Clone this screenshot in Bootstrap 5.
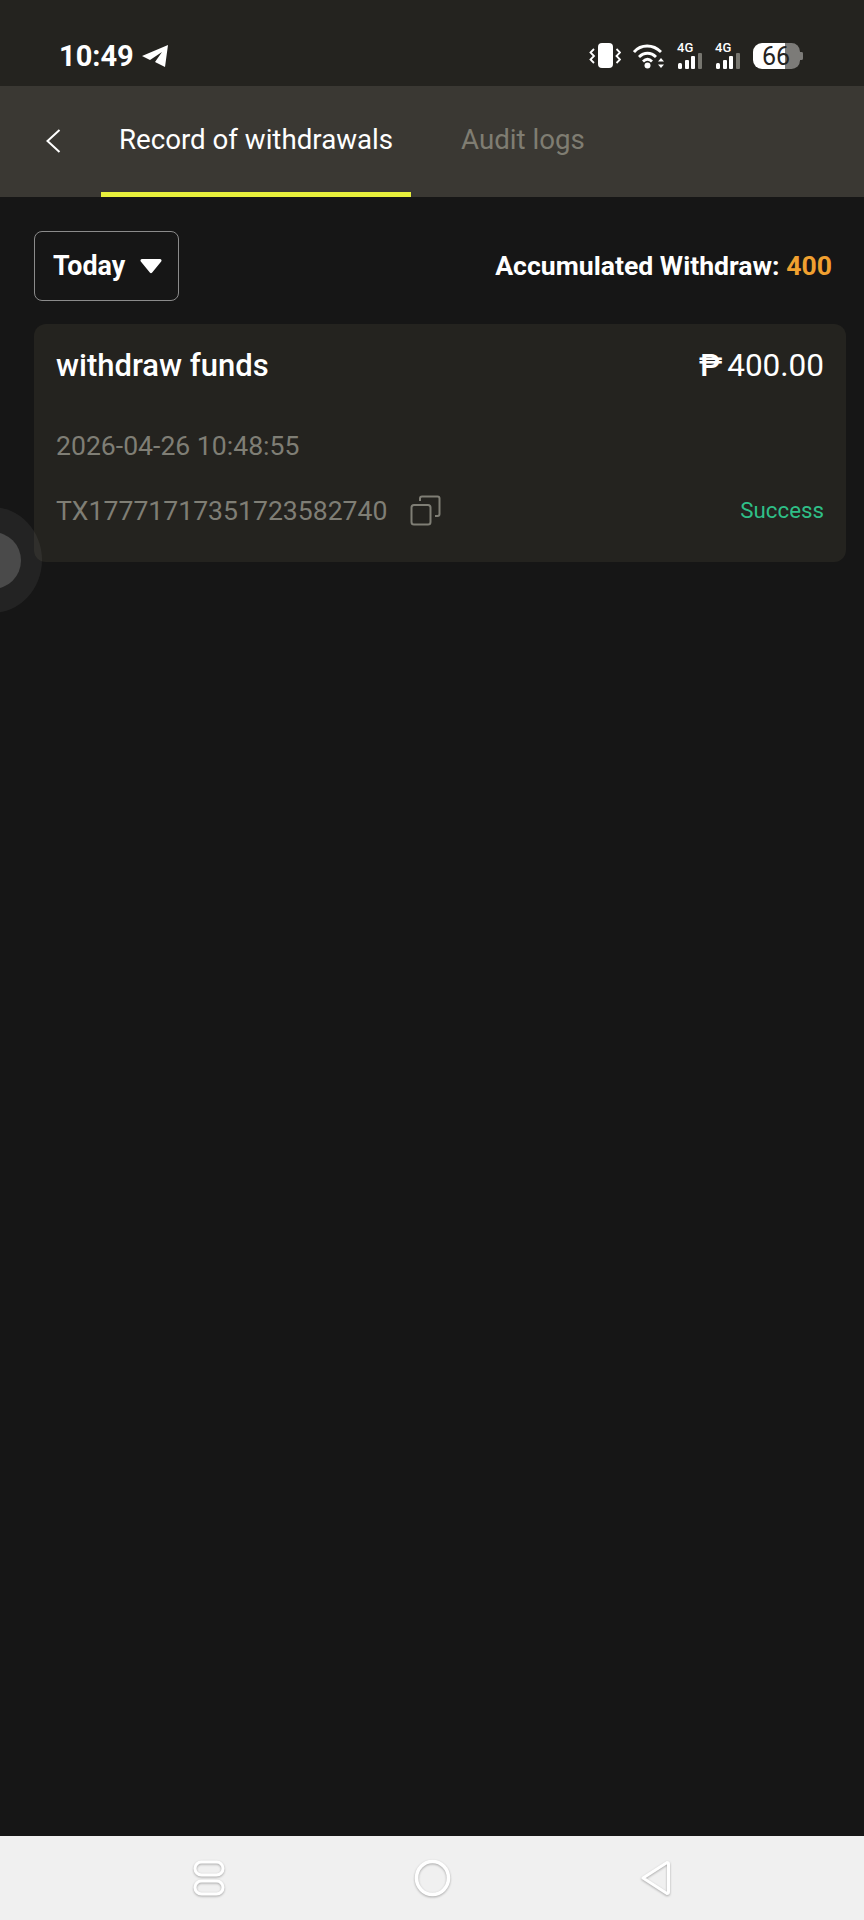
<!DOCTYPE html>
<html lang="en">
<head>
  <meta charset="UTF-8">
  <title>Record of withdrawals</title>
  <meta name="viewport" content="width=device-width, initial-scale=1">
  <link href="https://cdn.jsdelivr.net/npm/bootstrap@5.3.0/dist/css/bootstrap.min.css" rel="stylesheet">
  <style>
    body {
      background: #161616;
      font-family: Roboto, "Noto Sans", sans-serif;
      height: 1920px;
      overflow: hidden;
      color: #fff;
    }
    .status-row {
      height: 86px;
      background: #24231f;
      padding: 26px 61px 0 59px;
    }
    .status-time { font-size: 29px; font-weight: 700; line-height: 1; }
    .status-net { font-size: 13px; font-weight: 500; line-height: 10px; height: 10px; }
    .batt {
      width: 50px;
      height: 26px;
      position: relative;
      color: #24231f;
      font-size: 25px;
      line-height: 27px;
      text-align: center;
      padding-right: 4px;
    }
    .batt-txt { position: relative; }
    .batt svg { position: absolute; left: 0; top: 0; }
    .tab-head {
      height: 111px;
      background: #3a3833;
    }
    .back-btn { width: 101px; height: 109px; padding-left: 45px; }
    .tab-link {
      height: 111px;
      font-size: 27.7px;
      line-height: 108px;
      color: #fff;
      text-decoration: none;
      border-bottom: 5px solid transparent;
    }
    .tab-on { width: 310px; border-bottom-color: #e8f03c; text-align: center; }
    .tab-off { color: #7f7d72; margin-left: 50px; }
    .filter-row { padding: 34px 32px 23px 34px; }
    .today-btn {
      width: 145px;
      height: 70px;
      border: 1.5px solid #8b8b8b;
      border-radius: 8px;
      font-size: 26.800px;
      font-weight: 700;
      color: #fff;
      background: transparent;
      padding: 0 0 0 18px;
      gap: 14px;
    }
    .total-txt { font-size: 26.600px; font-weight: 700; }
    .total-txt span { color: #f0a030; }
    .rec-card {
      margin: 0 18px 0 34px;
      height: 238px;
      background: #24231f;
      border: 0;
      border-radius: 12px;
      padding: 0 22px;
      color: #fff;
    }
    .rec-title { font-size: 31px; font-weight: 500; line-height: 34px; }
    .rec-amount { font-size: 31.500px; font-weight: 400; line-height: 34px; }
    .rec-peso { font-weight: 500; margin-right: 5px; }
    .rec-top { padding-top: 25px; }
    .rec-date { font-size: 26.600px; color: #7f7e75; line-height: 30px; margin-top: 48px; }
    .rec-id { font-size: 26.600px; color: #7f7e75; line-height: 30px; }
    .rec-bot { margin-top: 33px; }
    .copy-ico { margin-left: 23px; }
    .rec-ok { font-size: 22.300px; color: #2fbf87; }
    .float-ball {
      position: absolute;
      left: -58px;
      top: 507px;
      width: 100px;
      height: 106px;
      border-radius: 50%;
      background: rgba(255, 255, 255, .06);
    }
    .float-ball::after {
      content: "";
      position: absolute;
      left: 22px;
      top: 25px;
      width: 57px;
      height: 57px;
      border-radius: 50%;
      background: #4a4a4a;
    }
    .sys-nav {
      position: absolute;
      left: 0;
      right: 0;
      top: 1836px;
      height: 84px;
      background: #f0f0f0;
      padding: 0 0 0 193px;
      gap: 189px;
    }
    .sys-nav svg { filter: drop-shadow(0 1px 1px #a8a8a8); }
  </style>
</head>
<body>
  <div class="status-row d-flex align-items-center justify-content-between">
    <div class="d-flex align-items-center">
      <span class="status-time">10:49</span>
      <svg class="ms-2" width="26" height="22" viewBox="0 0 26 22"><path d="M0 11 26 0 23 22 13 17 20 7 8 15Z" fill="#fff"/></svg>
    </div>
    <div class="d-flex align-items-center gap-2">
      <svg class="me-1" width="32" height="26" viewBox="0 0 32 26"><rect x="9" y="0" width="15" height="25" rx="4" fill="#fff"/><path d="M5 6 1.500 9.500l3.500 3.500-3.500 3.500L5 20M27.500 6 31 9.500 27.500 13l3.500 3.500L27.500 20" fill="none" stroke="#fff" stroke-width="1.800"/></svg>
      <svg class="me-1" width="32" height="26" viewBox="0 0 32 26"><path d="M1 9C8 1 20 1 28 9M6 14c5-5 12-5 17 0M10 18.500c3-3 6-3 9 0" fill="none" stroke="#fff" stroke-width="2.800"/><circle cx="14.500" cy="22.500" r="3" fill="#fff"/><path d="M28 15l3 3.500h-6ZM28 25l3-3.500h-6Z" fill="#fff"/></svg>
      <div class="d-flex flex-column align-items-start me-1">
        <span class="status-net">4G</span>
        <svg width="26" height="16" viewBox="0 0 26 16"><g fill="#fff"><rect x="1" y="10" width="4" height="6" rx="1.500"/><rect x="8" y="7" width="4" height="9" rx="1"/><rect x="14" y="3" width="4" height="13" rx="1"/></g><rect x="21" y="0" width="4" height="16" rx="1" fill="#77766f"/></svg>
      </div>
      <div class="d-flex flex-column align-items-start me-1">
        <span class="status-net">4G</span>
        <svg width="26" height="16" viewBox="0 0 26 16"><g fill="#fff"><rect x="1" y="10" width="4" height="6" rx="1.500"/><rect x="8" y="7" width="4" height="9" rx="1"/><rect x="14" y="3" width="4" height="13" rx="1"/></g><rect x="21" y="0" width="4" height="16" rx="1" fill="#77766f"/></svg>
      </div>
      <div class="batt">
        <svg width="50" height="26" viewBox="0 0 50 26"><path d="M47 9h1.500a1.500 1.500 0 0 1 1.500 1.500v5a1.500 1.500 0 0 1-1.500 1.500H47Z" fill="#7c7b78"/><path d="M32 0h6.500A8.500 8.500 0 0 1 47 8.500v9a8.500 8.500 0 0 1-8.500 8.500H32Z" fill="#7c7b78"/><path d="M32 0H9a9 9 0 0 0-9 9v8a9 9 0 0 0 9 9h23Z" fill="#fff"/></svg>
        <span class="batt-txt">66</span>
      </div>
    </div>
  </div>

  <div class="tab-head d-flex align-items-start">
    <div class="back-btn d-flex align-items-center">
      <svg width="16" height="26" viewBox="0 0 16 26"><path d="M14.500 2 2.500 13l12 11" fill="none" stroke="#fff" stroke-width="2"/></svg>
    </div>
    <a class="tab-link tab-on" href="#">Record of withdrawals</a>
    <a class="tab-link tab-off" href="#">Audit logs</a>
  </div>

  <div class="filter-row d-flex align-items-center justify-content-between">
    <button class="today-btn d-flex align-items-center" type="button">
      Today
      <svg width="24" height="16" viewBox="0 0 24 16"><path d="M3 1h18a1.500 1.500 0 0 1 1.200 2.400L13.200 14.500a1.500 1.500 0 0 1-2.400 0L1.800 3.400A1.500 1.500 0 0 1 3 1Z" fill="#fff"/></svg>
    </button>
    <div class="total-txt">Accumulated Withdraw: <span>400</span></div>
  </div>

  <div class="card rec-card">
    <div class="rec-top d-flex justify-content-between align-items-center">
      <div class="rec-title">withdraw funds</div>
      <div class="rec-amount"><span class="rec-peso">₱</span>400.00</div>
    </div>
    <div class="rec-date">2026-04-26 10:48:55</div>
    <div class="rec-bot d-flex justify-content-between align-items-center">
      <div class="d-flex align-items-center">
        <span class="rec-id">TX17771717351723582740</span>
        <svg class="copy-ico" width="31" height="31" viewBox="0 0 31 31"><g fill="none" stroke="#7f7e75" stroke-width="2"><rect x="1.500" y="10" width="19" height="19.500" rx="2.500"/><path d="M10 6V3.500A2 2 0 0 1 12 1.500h15.500a2 2 0 0 1 2 2V19a2 2 0 0 1-2 2H25"/></g></svg>
      </div>
      <span class="rec-ok">Success</span>
    </div>
  </div>

  <div class="float-ball"></div>

  <div class="sys-nav d-flex align-items-center">
    <svg width="32" height="36" viewBox="0 0 32 36"><g fill="none" stroke="#fff" stroke-width="3"><rect x="2" y="2" width="28" height="13" rx="6.500"/><rect x="2" y="21" width="28" height="13" rx="6.500"/></g></svg>
    <svg width="37" height="38" viewBox="0 0 37 38"><ellipse cx="18.500" cy="19" rx="16" ry="16.500" fill="none" stroke="#fff" stroke-width="3.500"/></svg>
    <svg width="31" height="36" viewBox="0 0 31 36"><path d="M27 2.500 3 18 27 33.500a1.500 1.500 0 0 0 1.500-1.500V4A1.500 1.500 0 0 0 27 2.500Z" fill="none" stroke="#fff" stroke-width="3" stroke-linejoin="round"/></svg>
  </div>
</body>
</html>
